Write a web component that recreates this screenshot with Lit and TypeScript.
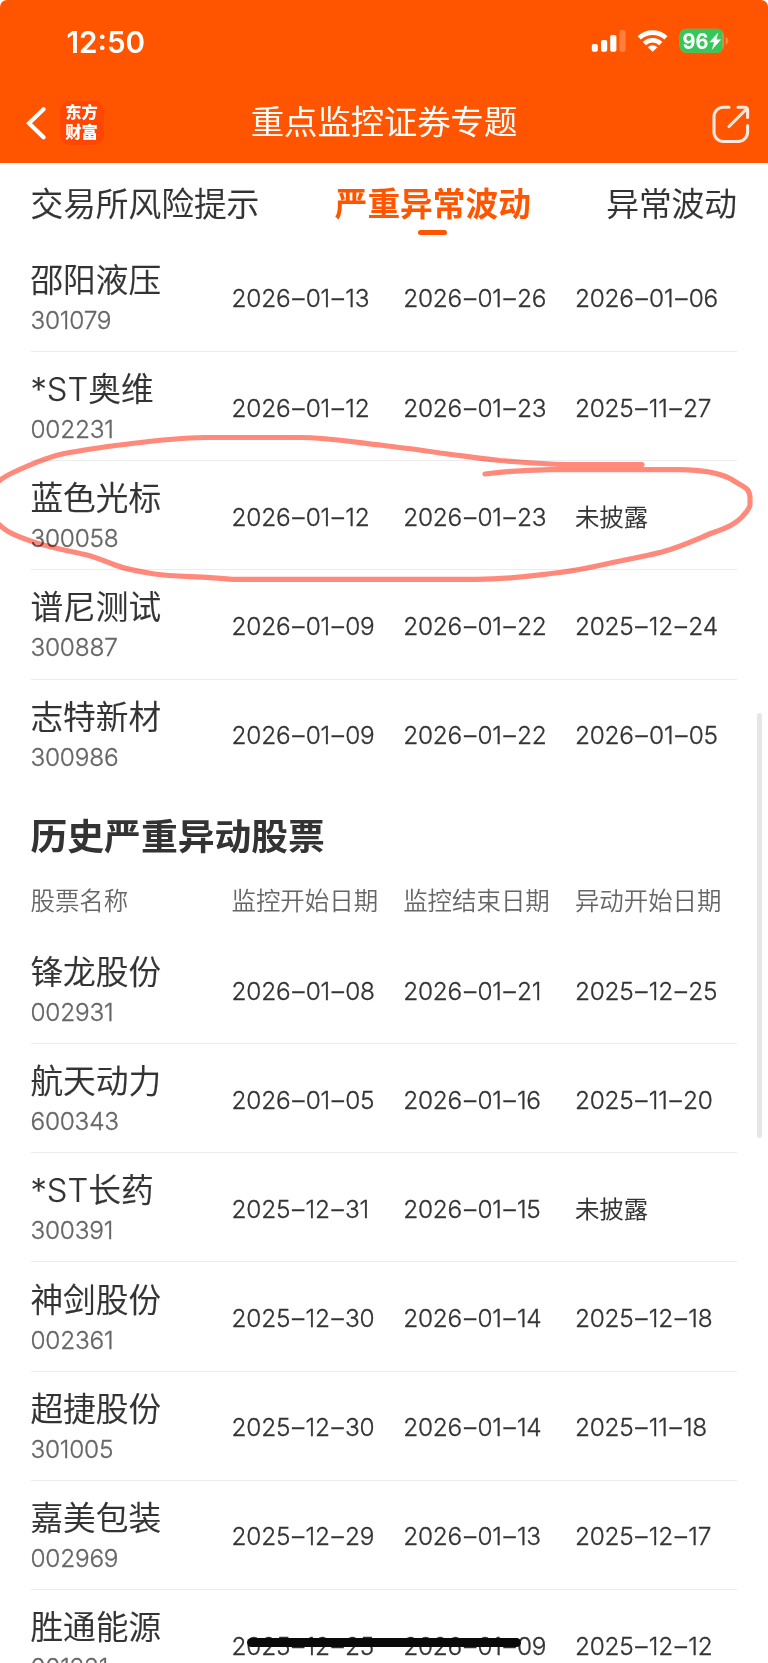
import { LitElement, html, css, svg } from "lit";
import { customElement, property } from "lit/decorators.js";

type Stock = [name: string, code: string, start: string, end: string, move: string];

const CURRENT: Stock[] = [
  ["邵阳液压", "301079", "2026–01–13", "2026–01–26", "2026–01–06"],
  ["*ST奥维", "002231", "2026–01–12", "2026–01–23", "2025–11–27"],
  ["蓝色光标", "300058", "2026–01–12", "2026–01–23", "未披露"],
  ["谱尼测试", "300887", "2026–01–09", "2026–01–22", "2025–12–24"],
  ["志特新材", "300986", "2026–01–09", "2026–01–22", "2026–01–05"],
];

const HISTORY: Stock[] = [
  ["锋龙股份", "002931", "2026–01–08", "2026–01–21", "2025–12–25"],
  ["航天动力", "600343", "2026–01–05", "2026–01–16", "2025–11–20"],
  ["*ST长药", "300391", "2025–12–31", "2026–01–15", "未披露"],
  ["神剑股份", "002361", "2025–12–30", "2026–01–14", "2025–12–18"],
  ["超捷股份", "301005", "2025–12–30", "2026–01–14", "2025–11–18"],
  ["嘉美包装", "002969", "2025–12–29", "2026–01–13", "2025–12–17"],
  ["胜通能源", "001331", "2025–12–25", "2026–01–09", "2025–12–12"],
];

@customElement("status-bar")
class StatusBar extends LitElement {
  static styles = css`
    :host { display: flex; height: 82px; padding: 0 39px 0 66.500px; align-items: center; justify-content: space-between; color: #fff; }
    .time { font-size: 29.600px; font-weight: 600; line-height: 36px; padding-top: 1px; }
    .icons { display: block; }
    .pct { font-size: 22px; font-weight: 700; fill: #fff; }
  `;
  render() {
    return html`
      <span class="time">12:50</span>
      <svg class="icons" width="138" height="26" viewBox="591 29 138 26">
        <rect x="591.8" y="45" width="6" height="7.8" rx="1.8" fill="#fff" />
        <rect x="601" y="41" width="6.2" height="11.8" rx="1.8" fill="#fff" />
        <rect x="610.2" y="36" width="6.2" height="16.8" rx="1.8" fill="#fff" />
        <rect x="619.4" y="31" width="6.2" height="21.8" rx="1.8" fill="#fff" opacity=".24" />
        <g fill="none" stroke="#fff" stroke-width="4.6">
          <path d="M639.3 38.900A19.400 19.400 0 0 1 665.900 38.900" />
          <path d="M644.400 44.600A11.800 11.800 0 0 1 660.800 44.600" />
        </g>
        <path d="M652.6 52.8L647.7 48.200Q652.6 44.400 657.5 48.200Z" fill="#fff" />
        <rect x="679.5" y="29.8" width="44.3" height="24" rx="7" fill="#ff8850" />
        <path d="M686.5 29.8H718.500Q722.500 30.500 722.500 34V49.500Q722.500 53 718.500 53.8H686.5A7 7 0 0 1 679.5 46.8V36.8A7 7 0 0 1 686.5 29.8Z" fill="#34c759" />
        <path d="M725.6 38V46Q728.4 44.8 728.4 42T725.6 38Z" fill="#ff8850" />
        <text class="pct" x="682.6" y="49.8" textLength="26" lengthAdjust="spacingAndGlyphs">96</text>
        <path d="M718.2 33.4L709.4 43.2H714L711.7 51L721.2 40.5H716.5Z" fill="#fff" />
      </svg>
    `;
  }
}

@customElement("nav-bar")
class NavBar extends LitElement {
  static styles = css`
    :host { display: grid; grid-template-columns: 1fr auto 1fr; height: 81.400px; align-items: center; padding: 0 18px; color: #fff; }
    .left { display: flex; align-items: center; gap: 13px; padding-left: 8px; }
    .left svg, .share { display: block; }
    .logo { display: flex; flex-direction: column; align-items: center; justify-content: center; gap: 2.500px; box-sizing: border-box; width: 44px; height: 44px; border-radius: 10px; background: #ff4602; font: 900 16.300px/17px "Noto Sans CJK SC", sans-serif; padding: 0 1px 2px 0; }
    .title { font-size: 33.300px; font-weight: 350; line-height: 40px; padding-bottom: 2px; -webkit-text-stroke: 0.200px; }
    .share { justify-self: end; margin-top: 3px; }
  `;
  render() {
    return html`
      <div class="left">
        <svg width="21" height="36" viewBox="26 104.500 21 36"><path d="M43.500 108.700L29 122.700L43.500 136.700" fill="none" stroke="#fff" stroke-width="4.200" stroke-linecap="round" stroke-linejoin="miter" /></svg>
        <div class="logo"><span>东方</span><span>财富</span></div>
      </div>
      <div class="title">重点监控证券专题</div>
      <svg class="share" width="38" height="38" viewBox="712 105.500 38 38">
        <g fill="none" stroke="#ffe9de" stroke-width="3.100" stroke-linecap="round" stroke-linejoin="round">
          <path d="M729 107.700H723.500A9.500 9.500 0 0 0 714 117.200V132.700A9.500 9.500 0 0 0 723.500 142H738A9.500 9.500 0 0 0 747.600 132.700V126" />
          <path d="M729 127L746.500 109.500M738 107.700H744.600Q747.600 107.700 747.600 110.700V118" />
        </g>
      </svg>
    `;
  }
}

@customElement("tab-strip")
class TabStrip extends LitElement {
  static styles = css`
    :host { display: flex; height: 79.400px; justify-content: space-between; align-items: flex-start; padding: 0 31px 0 30.500px; box-sizing: border-box; color: #333; }
    .tab { display: flex; flex-direction: column; align-items: center; padding-top: 20.600px; font-size: 32.700px; font-weight: 350; line-height: 40px; -webkit-text-stroke: 0.200px; }
    .active { color: #ff5500; font-weight: 600; -webkit-text-stroke: 0; }
    .active::after { content: ""; width: 29px; height: 5px; margin-top: 6px; border-radius: 2.500px; background: #ff5500; }
  `;
  render() {
    return html`<span class="tab">交易所风险提示</span><span class="tab active">严重异常波动</span><span class="tab">异常波动</span>`;
  }
}

@customElement("stock-list")
class StockList extends LitElement {
  @property({ attribute: false }) items: Stock[] = [];
  static styles = css`
    :host { display: block; padding: 0 31px; }
    .row { display: grid; grid-template-columns: 200.500px 171.700px 171.700px 1fr; height: 109.200px; box-sizing: border-box; border-bottom: 1px solid #ececec; align-items: center; color: #333; }
    .row.last { border-bottom-color: transparent; }
    .stock { margin-left: -0.600px; padding-top: 1px; }
    .name { font-size: 32.700px; font-weight: 350; line-height: 40px; -webkit-text-stroke: 0.200px; }
    .code { font-size: 24.400px; font-weight: 300; line-height: 30px; margin-top: 5px; color: #666; letter-spacing: -0.200px; -webkit-text-stroke: 0.300px; }
    .date { font-size: 24.400px; font-weight: 300; line-height: 30px; padding-top: 3px; letter-spacing: -0.200px; white-space: nowrap; -webkit-text-stroke: 0.300px; }
    .dash { margin: 0 1.500px 0 1.800px; font-feature-settings: "calt" 0; }
    .date.none { letter-spacing: 0; font-weight: 350; -webkit-text-stroke: 0.100px; }
  `;
  private date(text: string) {
    const parts = text.split("–");
    if (parts.length === 1) return html`<div class="date none">${text}</div>`;
    const [y, m, d] = parts;
    return html`<div class="date">${y}<span class="dash">–</span>${m}<span class="dash">–</span>${d}</div>`;
  }
  render() {
    const last = this.items.length - 1;
    return this.items.map(
      ([name, code, ...dates], i) => html`
        <div class="row ${i === last ? "last" : ""}">
          <div class="stock"><div class="name">${name}</div><div class="code">${code}</div></div>
          ${dates.map((d) => this.date(d))}
        </div>
      `,
    );
  }
}

@customElement("app-root")
class AppRoot extends LitElement {
  static styles = css`
    :host { display: block; position: relative; width: 768px; height: 1663px; overflow: hidden; background: #fff; font-family: Inter, "Noto Sans CJK SC", sans-serif; }
    .top { background: #ff5500; border-radius: 7px 7px 0 0; }
    .section { display: flex; flex-direction: column; height: 146.200px; padding: 0 31px 0 30.500px; }
    .heading { margin: 0; padding-top: 28.500px; font-size: 36.800px; font-weight: 600; line-height: 40px; color: #333; }
    .cols { display: grid; grid-template-columns: 201px 171.700px 171.700px 1fr; padding-top: 29px; font-size: 24.450px; font-weight: 350; line-height: 30px; color: #666; white-space: nowrap; }
    .scroll { position: absolute; left: 757px; top: 712.500px; width: 5.300px; height: 425.500px; border-radius: 3px; background: #e6e6e6; }
    .ink { position: absolute; left: 0; top: 0; mix-blend-mode: multiply; }
    .strike { position: absolute; left: 247px; top: 1637.500px; width: 274px; height: 9.500px; border-radius: 5px; background: #0a0a0a; }
  `;
  render() {
    return html`
      <header class="top"><status-bar></status-bar><nav-bar></nav-bar></header>
      <tab-strip></tab-strip>
      <stock-list .items=${CURRENT}></stock-list>
      <section class="section">
        <h2 class="heading">历史严重异动股票</h2>
        <div class="cols"><span>股票名称</span><span>监控开始日期</span><span>监控结束日期</span><span>异动开始日期</span></div>
      </section>
      <stock-list .items=${HISTORY}></stock-list>
      <div class="scroll"></div>
      <svg class="ink" width="768" height="620" viewBox="0 0 768 620">
        ${svg`<path fill="none" stroke="#ff8a7b" stroke-width="5.200" stroke-linecap="round" stroke-linejoin="round"
          d="M642 464.600H565C540 464 520 462 500 460.500C475 458 458 455 440 453C420 449.500 402 448 384 445.500C355 442.500 330 437.500 300 437.500H205C170 438 145 442 115 445.500C95 448.500 75 451 60 454.500C42 459 27 466 12 473C3 477 -4 483 -10 488V516C-4 522 2 528 9 532C20 538 28 540 40 544C55 548.500 70 551 85 554.500C95 557 105 561 115 565C128 570 142 572 155 574C175 577 200 576 232 579.300H475C510 579.500 530 576 560 572.500C585 569.500 605 564 625 560C640 557 650 555 662 552C680 547 695 540 712 533C730 527 736 523 742 517C747 511 749.500 509 750 505V497C749 488 747 489 730 478.500C715 471 697 469.800 680 469.600H550C525 470 505 471.500 485 474" />`}
      </svg>
      <div class="strike"></div>
    `;
  }
}
